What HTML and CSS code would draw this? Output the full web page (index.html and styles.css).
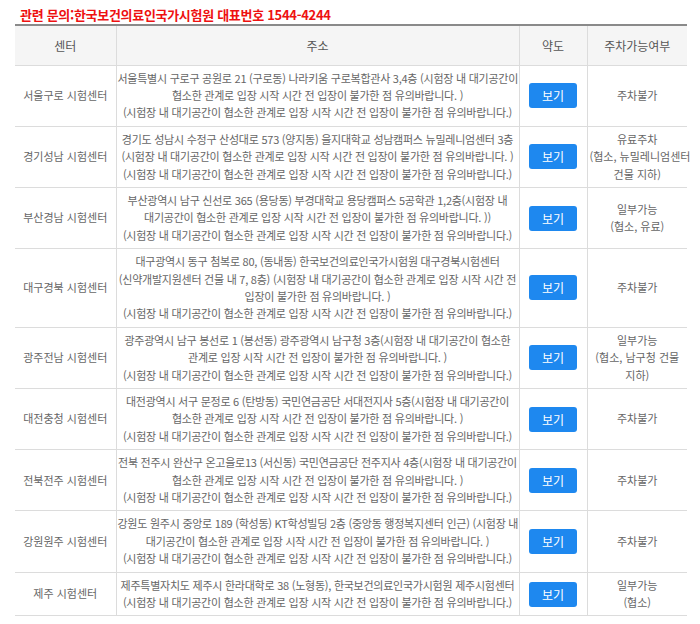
FILE: index.html
```html
<!DOCTYPE html>
<html lang="ko">
<head>
<meta charset="utf-8">
<link rel="stylesheet" href="styles.css">
</head>
<body>
<div class="wrap">
  <p class="notice">관련 문의:한국보건의료인국가시험원 대표번호 1544-4244</p>
  <table class="centers">
    <colgroup>
      <col class="c-name"><col class="c-addr"><col class="c-map"><col class="c-park">
    </colgroup>
    <thead>
      <tr><th>센터</th><th>주소</th><th>약도</th><th>주차가능여부</th></tr>
    </thead>
    <tbody>
      <tr>
        <td>서울구로 시험센터</td>
        <td class="addr">서울특별시 구로구 공원로 21 (구로동) 나라키움 구로복합관사 3,4층 (시험장 내 대기공간이<br>협소한 관계로 입장 시작 시간 전 입장이 불가한 점 유의바랍니다. )<br>(시험장 내 대기공간이 협소한 관계로 입장 시작 시간 전 입장이 불가한 점 유의바랍니다.)</td>
        <td><button class="btn">보기</button></td>
        <td>주차불가</td>
      </tr>
      <tr>
        <td>경기성남 시험센터</td>
        <td class="addr">경기도 성남시 수정구 산성대로 573 (양지동) 을지대학교 성남캠퍼스 뉴밀레니엄센터 3층<br>(시험장 내 대기공간이 협소한 관계로 입장 시작 시간 전 입장이 불가한 점 유의바랍니다. )<br>(시험장 내 대기공간이 협소한 관계로 입장 시작 시간 전 입장이 불가한 점 유의바랍니다.)</td>
        <td><button class="btn">보기</button></td>
        <td>유료주차<br>(협소, 뉴밀레니엄센터<br>건물 지하)</td>
      </tr>
      <tr>
        <td>부산경남 시험센터</td>
        <td class="addr">부산광역시 남구 신선로 365 (용당동) 부경대학교 용당캠퍼스 5공학관 1,2층(시험장 내<br>대기공간이 협소한 관계로 입장 시작 시간 전 입장이 불가한 점 유의바랍니다. ))<br>(시험장 내 대기공간이 협소한 관계로 입장 시작 시간 전 입장이 불가한 점 유의바랍니다.)</td>
        <td><button class="btn">보기</button></td>
        <td>일부가능<br>(협소, 유료)</td>
      </tr>
      <tr>
        <td>대구경북 시험센터</td>
        <td class="addr">대구광역시 동구 첨복로 80, (동내동) 한국보건의료인국가시험원 대구경북시험센터<br>(신약개발지원센터 건물 내 7, 8층) (시험장 내 대기공간이 협소한 관계로 입장 시작 시간 전<br>입장이 불가한 점 유의바랍니다. )<br>(시험장 내 대기공간이 협소한 관계로 입장 시작 시간 전 입장이 불가한 점 유의바랍니다.)</td>
        <td><button class="btn">보기</button></td>
        <td>주차불가</td>
      </tr>
      <tr>
        <td>광주전남 시험센터</td>
        <td class="addr">광주광역시 남구 봉선로 1 (봉선동) 광주광역시 남구청 3층(시험장 내 대기공간이 협소한<br>관계로 입장 시작 시간 전 입장이 불가한 점 유의바랍니다. )<br>(시험장 내 대기공간이 협소한 관계로 입장 시작 시간 전 입장이 불가한 점 유의바랍니다.)</td>
        <td><button class="btn">보기</button></td>
        <td>일부가능<br>(협소, 남구청 건물<br>지하)</td>
      </tr>
      <tr>
        <td>대전충청 시험센터</td>
        <td class="addr">대전광역시 서구 문정로 6 (탄방동) 국민연금공단 서대전지사 5층(시험장 내 대기공간이<br>협소한 관계로 입장 시작 시간 전 입장이 불가한 점 유의바랍니다. )<br>(시험장 내 대기공간이 협소한 관계로 입장 시작 시간 전 입장이 불가한 점 유의바랍니다.)</td>
        <td><button class="btn">보기</button></td>
        <td>주차불가</td>
      </tr>
      <tr>
        <td>전북전주 시험센터</td>
        <td class="addr">전북 전주시 완산구 온고을로13 (서신동) 국민연금공단 전주지사 4층(시험장 내 대기공간이<br>협소한 관계로 입장 시작 시간 전 입장이 불가한 점 유의바랍니다. )<br>(시험장 내 대기공간이 협소한 관계로 입장 시작 시간 전 입장이 불가한 점 유의바랍니다.)</td>
        <td><button class="btn">보기</button></td>
        <td>주차불가</td>
      </tr>
      <tr>
        <td>강원원주 시험센터</td>
        <td class="addr">강원도 원주시 중앙로 189 (학성동) KT학성빌딩 2층 (중앙동 행정복지센터 인근) (시험장 내<br>대기공간이 협소한 관계로 입장 시작 시간 전 입장이 불가한 점 유의바랍니다. )<br>(시험장 내 대기공간이 협소한 관계로 입장 시작 시간 전 입장이 불가한 점 유의바랍니다.)</td>
        <td><button class="btn">보기</button></td>
        <td>주차불가</td>
      </tr>
      <tr>
        <td>제주 시험센터</td>
        <td class="addr">제주특별자치도 제주시 한라대학로 38 (노형동), 한국보건의료인국가시험원 제주시험센터<br>(시험장 내 대기공간이 협소한 관계로 입장 시작 시간 전 입장이 불가한 점 유의바랍니다.)</td>
        <td><button class="btn">보기</button></td>
        <td>일부가능<br>(협소)</td>
      </tr>
    </tbody>
  </table>
</div>
</body>
</html>
```

FILE: styles.css
```css
* { box-sizing: border-box; }
html, body { margin: 0; padding: 0; background: #fff; }
body {
  font-family: "Noto Sans CJK KR", "Noto Sans", sans-serif;
  color: #666;
}
.wrap { padding: 6px 13px 0 15px; }
.notice {
  margin: 0;
  padding-left: 5px;
  height: 18px;
  line-height: 18px;
  font-size: 13px;
  font-weight: bold;
  color: #ee1111;
  letter-spacing: -0.3px;
}
.centers {
  width: 672px;
  border-collapse: collapse;
  table-layout: fixed;
  font-size: 11px;
  line-height: 17.4px;
}
.c-name { width: 101px; }
.c-addr { width: 403px; }
.c-map { width: 68px; }
.c-park { width: 100px; }
.centers thead tr { border-top: 2px solid #8a8a8a; }
.centers th {
  height: 40px;
  background: #f5f5f5;
  font-weight: normal;
  color: #555;
  font-size: 12px;
  text-align: center;
  border-bottom: 1px solid #dcdcdc;
}
.centers th + th, .centers td + td { border-left: 1px solid #dcdcdc; }
.centers td {
  padding: 4px 2px;
  text-align: center;
  vertical-align: middle;
  border-bottom: 1px solid #dcdcdc;
  white-space: nowrap;
}
.centers td.addr { padding: 4px 1px; letter-spacing: -0.25px; }
.btn {
  width: 48px;
  height: 25px;
  border: 0;
  border-radius: 3px;
  background: #1e88ef;
  color: #fff;
  font-family: inherit;
  font-size: 12px;
  cursor: pointer;
  display: inline-block;
  vertical-align: middle;
}
```
